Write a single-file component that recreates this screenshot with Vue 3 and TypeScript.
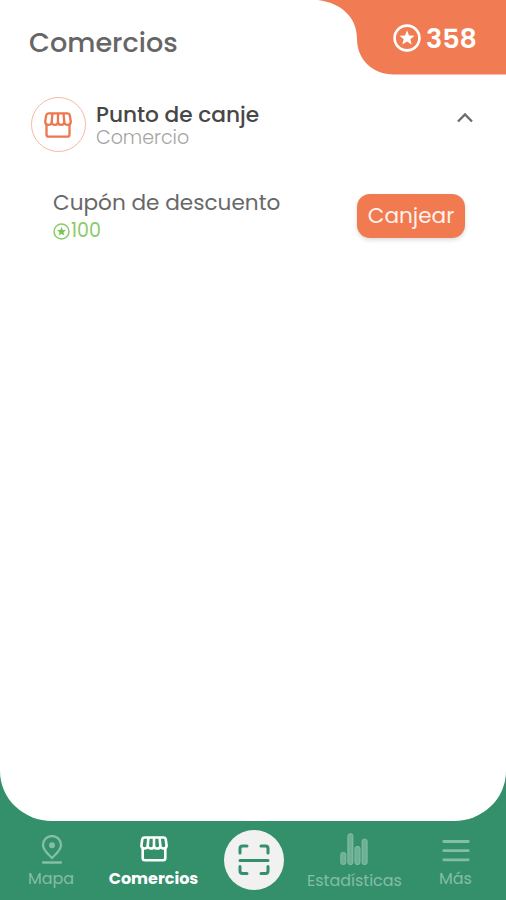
<script setup lang="ts">
interface Coupon {
  name: string
  cost: number
}

const points = 358
const coupons: Coupon[] = [{ name: 'Cupón de descuento', cost: 100 }]
</script>

<template>
  <div class="app">
    <main class="panel">
      <header class="header">
        <h1 class="title">Comercios</h1>
        <div class="balance">
          <svg class="balance-shape" viewBox="0 0 188 75" aria-hidden="true">
            <path d="M0 0C23 3 39 17 39 39C39 59 54 74.500 76 74.500H188V0Z" fill="#f17c53" />
          </svg>
          <svg class="balance-icon" viewBox="0 0 28 28" aria-hidden="true">
            <circle cx="14" cy="14" r="12.400" fill="none" stroke="#fff" stroke-width="2.600" />
            <path d="M14 6.300l2 5.100 5.500.300-4.200 3.500 1.400 5.300L14 17.500l-4.700 3 1.400-5.300-4.200-3.500 5.500-.300z" fill="#fff" />
          </svg>
          <span class="balance-value">{{ points }}</span>
        </div>
      </header>

      <section class="store">
        <div class="store-icon">
          <svg viewBox="0 0 28 26" aria-hidden="true">
            <g fill="none" stroke="#ed774f" stroke-width="2.300" stroke-linejoin="round">
              <path d="M4.500 1.300H23.500Q25.300 1.300 25.700 3L26.800 9.500C26.800 14 20.300 14 20.300 9.700C20.300 14 14 14 14 9.700C14 14 7.700 14 7.700 9.700C7.700 14 1.200 14 1.200 9.500L2.300 3Q2.700 1.300 4.500 1.300Z" />
              <path d="M8.500 1.300L7.700 9.700M14 1.300V9.700M19.500 1.300L20.300 9.700" />
              <path d="M2.500 12.500V22.500Q2.500 24.700 4.700 24.700H23.300Q25.500 24.700 25.500 22.500V12.500" />
            </g>
          </svg>
        </div>
        <div class="store-text">
          <h2 class="store-name">Punto de canje</h2>
          <p class="store-kind">Comercio</p>
        </div>
        <svg class="chevron" viewBox="0 0 18 12" aria-hidden="true">
          <path d="M2 9.500L9 2.500L16 9.500" fill="none" stroke="#6b6b6b" stroke-width="2.300" />
        </svg>
      </section>

      <section v-for="coupon in coupons" :key="coupon.name" class="coupon">
        <div class="coupon-text">
          <p class="coupon-name">{{ coupon.name }}</p>
          <p class="coupon-cost">
            <svg viewBox="0 0 28 28" aria-hidden="true">
              <circle cx="14" cy="14" r="12.300" fill="none" stroke="#8bcb6b" stroke-width="2.500" />
              <path d="M14 6.300l2 5.100 5.500.300-4.200 3.500 1.400 5.300L14 17.500l-4.700 3 1.400-5.300-4.200-3.500 5.500-.300z" fill="#7ac456" />
            </svg>
            <span>{{ coupon.cost }}</span>
          </p>
        </div>
        <button class="redeem" type="button"><span>Canjear</span></button>
      </section>
    </main>

    <nav class="nav">
      <a class="item mapa">
        <svg width="22" height="30" viewBox="0 0 22 30" aria-hidden="true">
          <g fill="none" stroke="currentColor" stroke-width="2.300">
            <path d="M11 23C7 19 2 15 2 10A9 9 0 0 1 20 10C20 15 15 19 11 23Z" />
            <path d="M2 27.500H20" stroke-linecap="round" />
          </g>
          <circle cx="11" cy="10.200" r="3" fill="currentColor" />
        </svg>
        <span>Mapa</span>
      </a>
      <a class="item comercios">
        <svg width="28" height="26" viewBox="0 0 28 26" aria-hidden="true">
          <g fill="none" stroke="currentColor" stroke-width="2.600" stroke-linejoin="round">
            <path d="M4.500 1.500H23.500Q25.300 1.500 25.700 3L26.600 9.500C26.600 13.500 20.300 13.500 20.300 9.700C20.300 13.500 14 13.500 14 9.700C14 13.500 7.700 13.500 7.700 9.700C7.700 13.500 1.400 13.500 1.400 9.500L2.300 3Q2.700 1.500 4.500 1.500Z" />
            <path d="M8.500 1.300L7.700 9.700M14 1.300V9.700M19.500 1.300L20.300 9.700" />
            <path d="M2.700 12.500V22Q2.700 24.200 4.900 24.200H23.100Q25.300 24.200 25.300 22V12.500" />
          </g>
        </svg>
        <span>Comercios</span>
      </a>
      <a class="scan">
        <svg width="32" height="32" viewBox="0 0 32 32" aria-hidden="true">
          <path d="M2 9V4.500Q2 2 4.500 2H9M23 2H27.500Q30 2 30 4.500V9M2 22.500V27Q2 29.500 4.500 29.500H9M23 29.500H27.500Q30 29.500 30 27V22.500M2 16.500H30" fill="none" stroke="#33906b" stroke-width="3" stroke-linecap="round" />
        </svg>
      </a>
      <a class="item estadisticas">
        <svg width="28" height="32" viewBox="0 0 28 32" aria-hidden="true">
          <g fill="currentColor" fill-opacity=".7" stroke="currentColor" stroke-width="1">
            <rect x=".8" y="19.500" width="5" height="12" rx="2" />
            <rect x="7.900" y=".8" width="5" height="30.700" rx="2" />
            <rect x="15" y="13.500" width="5" height="18" rx="2" />
            <rect x="22.100" y="6.200" width="5" height="25.300" rx="2" />
          </g>
        </svg>
        <span>Estadísticas</span>
      </a>
      <a class="item mas">
        <svg width="28" height="24" viewBox="0 0 28 24" aria-hidden="true">
          <path d="M1.800 2.500H26.200M1.800 11.700H26.200M1.800 20.800H26.200" fill="none" stroke="currentColor" stroke-width="2.800" stroke-linecap="round" />
        </svg>
        <span>Más</span>
      </a>
    </nav>
  </div>
</template>

<style>
body {
  margin: 0;
}
</style>

<style scoped>
.app {
  width: 506px;
  height: 900px;
  display: flex;
  flex-direction: column;
  background: #33906b;
  font-family: Poppins, Inter, sans-serif;
  overflow: hidden;
}
h1, h2, p {
  margin: 0;
}
svg {
  display: block;
  flex: none;
}
span, h1, h2, p {
  white-space: nowrap;
}
.panel {
  height: 821px;
  box-sizing: border-box;
  background: #fff;
  border-radius: 0 0 52px 52px / 0 0 50px 50px;
  overflow: hidden;
}
.header {
  height: 75px;
  display: flex;
  justify-content: space-between;
}
.title {
  margin: 23px 0 0 29px;
  font-size: 27.1px;
  line-height: 40px;
  font-weight: 500;
  color: #666;
}
.balance {
  position: relative;
  width: 188px;
  box-sizing: border-box;
  padding: 0 0 0 75px;
  display: flex;
  gap: 5px;
}
.balance-shape {
  position: absolute;
  top: 0;
  left: 0;
  width: 188px;
  height: 75px;
}
.balance-icon {
  position: relative;
  width: 28px;
  height: 28px;
  margin-top: 24px;
}
.balance-value {
  position: relative;
  margin-top: 19px;
  font-size: 27px;
  line-height: 40px;
  font-weight: 600;
  color: #fff;
}
.store {
  margin-top: 22px;
  padding: 0 32px 0 31px;
  height: 56px;
  display: flex;
}
.store-icon {
  width: 55px;
  height: 55px;
  box-sizing: border-box;
  border: 1px solid #f8b8a3;
  border-radius: 50%;
  display: flex;
  align-items: center;
  justify-content: center;
}
.store-icon svg {
  width: 28px;
  height: 26px;
  margin-right: 1px;
}
.store-text {
  margin: 6px 0 0 10px;
  flex: 1;
}
.store-name {
  font-size: 21.7px;
  line-height: 24px;
  font-weight: 500;
  color: #474747;
}
.store-kind {
  font-size: 19px;
  line-height: 22px;
  font-weight: 300;
  color: #a5a5a5;
}
.chevron {
  width: 18px;
  height: 12px;
  margin-top: 15px;
}
.coupon {
  margin-top: 37px;
  padding: 0 41px 0 53px;
  display: flex;
  justify-content: space-between;
}
.coupon-name {
  font-size: 21.6px;
  line-height: 30px;
  font-weight: 400;
  color: #686868;
  margin-top: -2px;
}
.coupon-cost {
  display: flex;
  align-items: center;
  gap: 1px;
  font-size: 19px;
  line-height: 26px;
  font-weight: 400;
  color: #8bcb6b;
}
.coupon-cost svg {
  width: 17px;
  height: 17px;
}
.redeem {
  margin-top: 4px;
  width: 108px;
  height: 44px;
  padding: 0;
  border: 0;
  border-radius: 13px;
  background: #f17a51;
  box-shadow: 0 2px 4px rgba(0, 0, 0, 0.15);
  color: #fff1ec;
  font-family: inherit;
  font-size: 21.6px;
  line-height: 44px;
  font-weight: 400;
}
.nav {
  height: 79px;
  display: grid;
  grid-template-columns: 102px 103px 99px 101px 101px;
}
.item {
  display: flex;
  flex-direction: column;
  align-items: center;
  color: #85bda7;
  font-size: 16px;
  line-height: 20px;
}
.item svg {
  margin-top: 14px;
}
.mapa svg {
  margin-left: 2px;
}
.mapa span {
  margin-top: 4px;
}
.comercios {
  color: #fff;
  font-weight: 700;
}
.comercios svg {
  margin-top: 15px;
  margin-left: 1px;
}
.comercios span {
  margin-top: 7px;
}
.scan {
  width: 60px;
  height: 60px;
  margin: 9px 0 0 19px;
  border-radius: 50%;
  background: #f1f1f1;
  display: flex;
  align-items: center;
  justify-content: center;
}
.estadisticas svg {
  margin-top: 12px;
  margin-right: 1px;
}
.estadisticas span {
  margin-top: 6px;
}
.mas svg {
  margin-top: 18px;
}
.mas span {
  margin-top: 6px;
}
</style>
